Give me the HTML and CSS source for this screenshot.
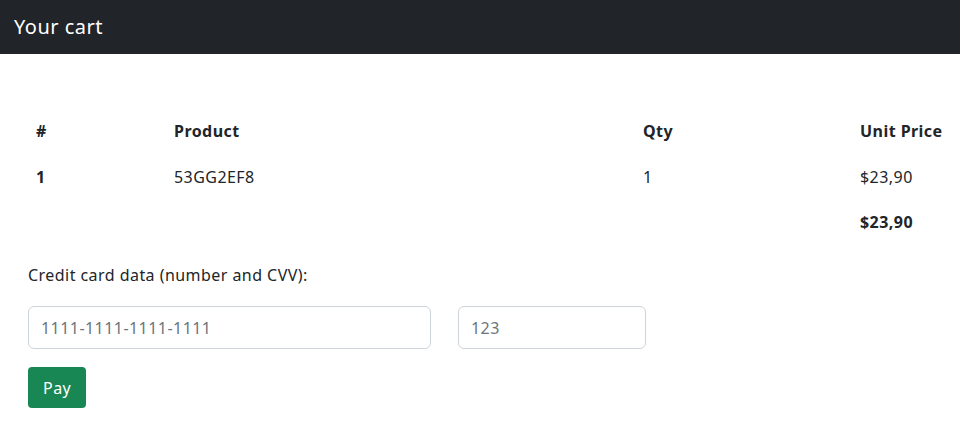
FILE: index.html
```html
<!DOCTYPE html>
<html>
<head>
<meta charset="utf-8">
<link rel="stylesheet" href="styles.css">
</head>
<body>
<nav class="navbar"><span class="brand">Your cart</span></nav>
<main class="main">
  <table class="cart">
    <thead>
      <tr><th class="c-num">#</th><th class="c-prod">Product</th><th class="c-qty">Qty</th><th class="c-price">Unit Price</th></tr>
    </thead>
    <tbody>
      <tr class="item"><th>1</th><td>53GG2EF8</td><td>1</td><td>$23,90</td></tr>
      <tr class="total"><td></td><td></td><td></td><th>$23,90</th></tr>
    </tbody>
  </table>
  <form class="pay-form">
    <label class="label">Credit card data (number and CVV):</label>
    <div class="inputs">
      <input class="field card" type="text" placeholder="1111-1111-1111-1111">
      <input class="field cvv" type="text" placeholder="123">
    </div>
    <button class="btn" type="button">Pay</button>
  </form>
</main>
</body>
</html>
```
FILE: styles.css
```css
* { box-sizing: border-box; }
body {
  margin: 0;
  font-family: "Noto Sans", "DejaVu Sans", sans-serif;
  font-size: 16px;
  line-height: 1.5;
  letter-spacing: 0.45px;
  color: #212529;
  background: #fff;
}
.navbar {
  background: #212529;
  height: 54px;
  display: flex;
  align-items: center;
  padding-left: 14px;
}
.brand {
  color: #fff;
  font-size: 20px;
  letter-spacing: 0.5px;
}
.main {
  padding: 54px 12px 0 28px;
}
.cart {
  border-collapse: collapse;
  table-layout: fixed;
  width: 920px;
}
.cart th, .cart td {
  text-align: left;
  padding: 8px;
  height: 45px;
  vertical-align: middle;
  white-space: nowrap;
}
.cart th { font-weight: 700; }
.c-num { width: 138px; }
.c-prod { width: 469px; }
.c-qty { width: 217px; }
.c-price { width: 96px; }
.item th, .item td { height: 48px; }
.total th, .total td { height: 42px; padding-top: 4px; padding-bottom: 4px; }
.pay-form {
  margin-top: 20px;
  display: flex;
  flex-direction: column;
  align-items: flex-start;
}
.label { margin-bottom: 19px; }
.inputs {
  display: flex;
  gap: 27px;
  margin-bottom: 18px;
}
.field {
  height: 43px;
  border: 1px solid #ced4da;
  border-radius: 6px;
  padding: 6px 12px;
  font: inherit;
  letter-spacing: inherit;
  color: #212529;
}
.field::placeholder { color: #6c757d; }
.card { width: 403px; }
.cvv { width: 188px; }
.btn {
  background: #198754;
  color: #fff;
  border: 0;
  border-radius: 4px;
  height: 41px;
  padding: 0 15px;
  font: inherit;
  letter-spacing: inherit;
}
```
